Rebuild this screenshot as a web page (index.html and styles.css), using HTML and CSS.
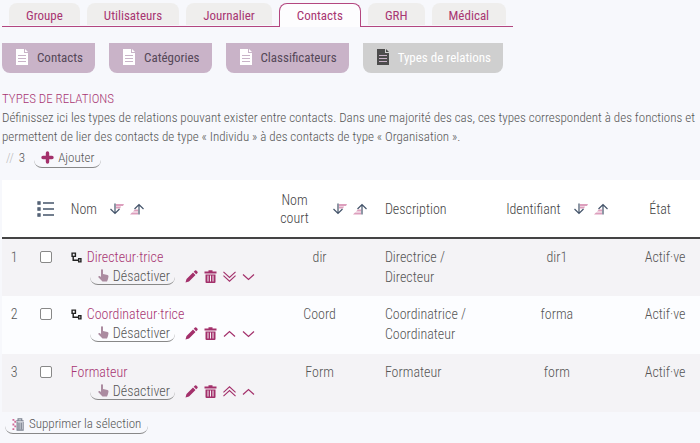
FILE: index.html
```html
<!DOCTYPE html>
<html lang="fr">
<head>
<meta charset="utf-8">
<title>Types de relations</title>
<link rel="stylesheet" href="styles.css">
</head>
<body>
<svg class="defs" aria-hidden="true">
  <symbol id="doc" viewBox="0 0 12 16"><path fill="currentColor" d="M0 0h8v4h4v12H0z"/><path fill="currentColor" d="M9 0l3 3H9z"/><path class="doc-lines" d="M2 6.500h8M2 9.500h8M2 12.500h8"/></symbol>
  <symbol id="plus" viewBox="0 0 13 13"><path d="M6.500 2v9M2 6.500h9" fill="none" stroke="#a3306b" stroke-width="3.400" stroke-linecap="round"/></symbol>
  <symbol id="list" viewBox="0 0 17 16"><path d="M1 1h2v2H1zM1 7h2v2H1zM1 13h2v2H1z" fill="none" stroke="#44546a" stroke-width="1.300"/><path d="M6 2h11M6 8h11M6 14h11" stroke="#44546a" stroke-width="1.400"/></symbol>
  <symbol id="sort-down" viewBox="0 0 14 12"><path d="M6 1h8l-1 2H6zM6 3.500h5l-1 2H6z" fill="#dd9fbd"/><path d="M5 .5v10M.5 6l4.500 4.500L9.500 6" fill="none" stroke="#44546a" stroke-width="1.200"/></symbol>
  <symbol id="sort-up" viewBox="0 0 14 12"><path d="M0 11.500l2-2h6v2zM3 8.500l2-2h3v2z" fill="#dd9fbd"/><path d="M9 11.500v-10M4.500 6L9 1.500 13.500 6" fill="none" stroke="#44546a" stroke-width="1.200"/></symbol>
  <symbol id="tree" viewBox="0 0 10 10"><path d="M1 1h3v3H1zM7 6h2v3H7zM2 4v3.500h5" fill="none" stroke="#222" stroke-width="1.300"/></symbol>
  <symbol id="hand" viewBox="0 0 11 13"><path d="M3 1.200C3 0 5 0 5 1.200V5l4.500 1Q10.500 6.300 10.500 7.500L10 10 9 12.500H4.500L.6 8.600C-.2 7.500 1 6.500 2 7.200L3 8z" fill="#ab8ba0"/></symbol>
  <symbol id="pencil" viewBox="0 0 13 13"><path d="M.5 12.500L1.500 9l6.500-6.500L10.500 5 4 11.500zM8.700 1.800L10 .5q.7-.5 1.300 0l1.200 1.200q.5.600 0 1.300l-1.300 1.300z" fill="#a3306b"/></symbol>
  <symbol id="trash" viewBox="0 0 12 13"><path d="M0 1.500h4V.3h4v1.200h4v2H0zM1 4.500h10V12q0 1-1 1H2q-1 0-1-1z" fill="#a3306b"/><path d="M3.500 5.500v6M6 5.500v6M8.500 5.500v6" stroke="#f4f3f6"/></symbol>
  <symbol id="down" viewBox="0 0 13 12"><path d="M1 4l5.500 5L12 4" fill="none" stroke="#a3306b" stroke-width="1.200"/></symbol>
  <symbol id="up" viewBox="0 0 13 12"><path d="M1 9l5.500-5L12 9" fill="none" stroke="#a3306b" stroke-width="1.200"/></symbol>
  <symbol id="downs" viewBox="0 0 14 12"><path d="M.5 1L7 7l6.500-6M.5 5L7 11l6.500-6" fill="none" stroke="#a3306b" stroke-width="1.200"/></symbol>
  <symbol id="ups" viewBox="0 0 14 12"><path d="M.5 7L7 1l6.500 6M.5 11L7 5l6.500 6" fill="none" stroke="#a3306b" stroke-width="1.200"/></symbol>
  <symbol id="trash-list" viewBox="0 0 13 14"><path d="M0 2h2M0 7h2M0 12h2M2 4h2M2 9h2" stroke="#cf6a98" stroke-width="2"/><path d="M5 4h5.500v9H5z" fill="#c9ccd4"/><path d="M4 3h8M6 3V1h4v2M5 4v9h6.500V4M7 5v7M9.500 5v7" fill="none" stroke="#7c8290" stroke-width="1.200"/></symbol>
</svg>
<nav class="tabs">
  <a class="tab" href="#">Groupe</a>
  <a class="tab" href="#">Utilisateurs</a>
  <a class="tab" href="#">Journalier</a>
  <a class="tab active" href="#">Contacts</a>
  <a class="tab" href="#">GRH</a>
  <a class="tab" href="#">Médical</a>
</nav>
<nav class="subtabs">
  <a class="subtab" href="#"><svg><use href="#doc"/></svg>Contacts</a>
  <a class="subtab" href="#"><svg><use href="#doc"/></svg>Catégories</a>
  <a class="subtab" href="#"><svg><use href="#doc"/></svg>Classificateurs</a>
  <a class="subtab current" href="#"><svg><use href="#doc"/></svg>Types de relations</a>
</nav>
<main>
  <h1>TYPES DE RELATIONS</h1>
  <p class="intro">Définissez ici les types de relations pouvant exister entre contacts. Dans une majorité des cas, ces types correspondent à des fonctions et permettent de lier des contacts de type « Individu » à des contacts de type « Organisation ».</p>
  <div class="count"><span class="slashes">//</span><span>3</span><button class="pill"><svg class="i13"><use href="#plus"/></svg>Ajouter</button></div>
  <table>
    <colgroup><col class="c-num"><col class="c-check"><col class="c-name"><col class="c-short"><col class="c-desc"><col class="c-id"><col class="c-state"></colgroup>
    <thead>
      <tr>
        <th></th>
        <th><svg class="list"><use href="#list"/></svg></th>
        <th class="left"><div class="head">Nom<span class="sorts"><svg><use href="#sort-down"/></svg><svg><use href="#sort-up"/></svg></span></div></th>
        <th><div class="head narrow"><span class="grow">Nom court</span><span class="sorts"><svg><use href="#sort-down"/></svg><svg><use href="#sort-up"/></svg></span></div></th>
        <th class="left">Description</th>
        <th><div class="head centered">Identifiant<span class="sorts"><svg><use href="#sort-down"/></svg><svg><use href="#sort-up"/></svg></span></div></th>
        <th class="state">État</th>
      </tr>
    </thead>
    <tbody>
      <tr>
        <td>1</td>
        <td><input type="checkbox" aria-label="Directeur·trice"></td>
        <td class="left"><a class="name" href="#"><svg class="tree"><use href="#tree"/></svg>Directeur·trice</a>
          <div class="actions"><button class="pill"><svg class="hand"><use href="#hand"/></svg>Désactiver</button><button class="icon" aria-label="Modifier"><svg><use href="#pencil"/></svg></button><button class="icon" aria-label="Supprimer"><svg><use href="#trash"/></svg></button><button class="icon" aria-label="Tout en bas"><svg><use href="#downs"/></svg></button><button class="icon" aria-label="Descendre"><svg><use href="#down"/></svg></button></div></td>
        <td>dir</td><td class="left">Directrice / Directeur</td><td>dir1</td><td>Actif·ve</td>
      </tr>
      <tr>
        <td>2</td>
        <td><input type="checkbox" aria-label="Coordinateur·trice"></td>
        <td class="left"><a class="name" href="#"><svg class="tree"><use href="#tree"/></svg>Coordinateur·trice</a>
          <div class="actions"><button class="pill"><svg class="hand"><use href="#hand"/></svg>Désactiver</button><button class="icon" aria-label="Modifier"><svg><use href="#pencil"/></svg></button><button class="icon" aria-label="Supprimer"><svg><use href="#trash"/></svg></button><button class="icon" aria-label="Monter"><svg><use href="#up"/></svg></button><button class="icon" aria-label="Descendre"><svg><use href="#down"/></svg></button></div></td>
        <td>Coord</td><td class="left">Coordinatrice / Coordinateur</td><td>forma</td><td>Actif·ve</td>
      </tr>
      <tr>
        <td>3</td>
        <td><input type="checkbox" aria-label="Formateur"></td>
        <td class="left"><a class="name" href="#">Formateur</a>
          <div class="actions"><button class="pill"><svg class="hand"><use href="#hand"/></svg>Désactiver</button><button class="icon" aria-label="Modifier"><svg><use href="#pencil"/></svg></button><button class="icon" aria-label="Supprimer"><svg><use href="#trash"/></svg></button><button class="icon" aria-label="Tout en haut"><svg><use href="#ups"/></svg></button><button class="icon" aria-label="Monter"><svg><use href="#up"/></svg></button></div></td>
        <td>Form</td><td class="left">Formateur</td><td>form</td><td>Actif·ve</td>
      </tr>
    </tbody>
  </table>
  <div class="bulk"><button class="pill"><svg class="i13"><use href="#trash-list"/></svg>Supprimer la sélection</button></div>
</main>
</body>
</html>
```
FILE: styles.css
```css
* { box-sizing: border-box; }
body {
  margin: 0;
  padding: 3px 0 0 2px;
  background: #f7f8fc;
  color: #555;
  font: 300 14px/18px "Roboto Condensed", "Liberation Sans Narrow", "Liberation Sans", sans-serif;
}
svg { display: block; flex: none; }
.defs { display: none; }
a { text-decoration: none; }
button { font: inherit; color: inherit; background: none; border: 0; padding: 0; }

.tabs {
  display: flex;
  gap: 7px;
  width: max-content;
  height: 24px;
  padding: 0 7px;
  border-bottom: 1px solid #b3467f;
  font-weight: 400;
  font-size: 13px;
}
.tab {
  height: 22px;
  padding: 4px 17px 0;
  border-radius: 8px 8px 0 0;
  background: #efeeed;
  color: #a83672;
}
.tab.active {
  height: 24px;
  border: 1px solid #b3467f;
  border-bottom: 0;
  padding-top: 3px;
  background: #fdfdfe;
}

.subtabs { display: flex; gap: 14px; margin-top: 16px; font-weight: 400; font-size: 13px; }
.subtab {
  display: flex;
  align-items: center;
  gap: 9px;
  height: 30px;
  padding: 0 12px 0 14px;
  border-radius: 0 0 8px 8px;
  background: #c9b3c8;
  color: #554858;
}
.subtab svg { width: 12px; height: 16px; color: #fff; margin-bottom: 3px; }
.doc-lines { stroke: #c9b3c8; }
.subtab.current { background: #cfcfcf; color: #fff; }
.subtab.current svg { color: #4c4c4c; }

h1 { margin: 16px 0 0; font-size: 13px; line-height: 19px; font-weight: 300; color: #a83672; }
.intro { margin: 0; font-size: 13px; line-height: 19px; }
.count { display: flex; align-items: center; height: 24px; padding-left: 4px; gap: 5px; font-size: 13px; }
.slashes { color: #bbb; }
.pill {
  display: flex;
  align-items: center;
  gap: 4px;
  height: 20px;
  padding: 0 7px;
  border-bottom: 1px solid #888;
  border-radius: 0 0 8px 8px;
  white-space: nowrap;
}
.count .pill { margin-left: 4px; }
.i13 { width: 13px; height: 13px; }
.hand { width: 11px; height: 13px; }

table { width: 100%; margin-top: 10px; border-collapse: collapse; table-layout: fixed; }
.c-num { width: 3.5%; }
.c-check { width: 5.5%; }
.c-name { width: 28%; }
.c-short { width: 17%; }
.c-desc { width: 15%; }
.c-id { width: 21%; }
.c-state { width: 10%; }
th { height: 58px; padding: 0 4px; background: #fff; font-weight: 300; color: #444; border-bottom: 2px solid #444; }
td { height: 58px; padding: 8px 4px 0; vertical-align: top; text-align: center; line-height: 20px; }
.left { text-align: left; padding-left: 6px; }
.state { padding-right: 14px; }
tbody tr:nth-child(odd) { background: #f4f3f6; }
tbody tr:nth-child(even) { background: #fcfdff; }
.list { width: 17px; height: 16px; margin: 0 auto; }
.head { display: flex; align-items: center; gap: 13px; }
.head.centered { justify-content: center; }
.head.narrow { gap: 12px; padding: 0 10px 0 4px; }
.grow { flex: 1; padding: 0 12px; }
.sorts { display: flex; gap: 6px; }
.sorts svg { width: 14px; height: 12px; }
input { display: block; width: 12px; height: 12px; margin: 4px auto 0; appearance: none; background: #fff; border: 1px solid #888; border-radius: 2px; }
.name { display: flex; align-items: center; gap: 5px; color: #a83672; }
.tree { width: 11px; height: 11px; }
.actions { display: flex; align-items: center; gap: 6px; padding-left: 19px; }
.actions .pill { height: 18px; width: 85px; padding: 0 8px; margin-right: 4px; }
.icon svg { width: 13px; height: 13px; }
.bulk { padding: 3px; font-size: 13px; }
.bulk .pill { height: 19px; }
```
